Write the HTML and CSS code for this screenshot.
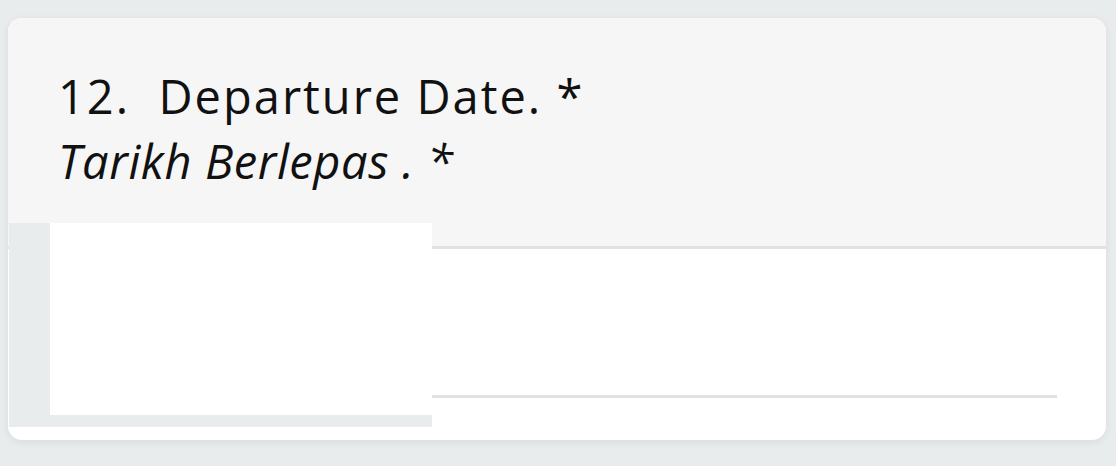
FILE: index.html
```html
<!DOCTYPE html>
<html lang="en">
<head>
  <meta charset="UTF-8">
  <meta name="viewport" content="width=device-width, initial-scale=1.0">
  <title>Departure Date</title>
  <link rel="stylesheet" href="styles.css">
</head>
<body>

<div class="card">
  <div class="card-header">
    <div class="question">12.&nbsp; Departure Date. *</div>
    <div class="question-alt">Tarikh Berlepas . *</div>
  </div>

  <div class="card-body">
    <input type="text" class="date-input" aria-label="Departure Date">
  </div>

  <!-- redacted area -->
  <div class="redact">
    <div class="redact-inner"></div>
  </div>
</div>

</body>
</html>
```

FILE: styles.css
```css
body {
  margin: 0;
  padding: 18px 10px 26px 8px;
  background-color: #e9ecec;
  font-family: 'Open Sans', 'Noto Sans', sans-serif;
}

.card {
  position: relative;
  width: 1098px;
  background-color: white;
  border-radius: 14px;
  overflow: hidden;
  box-shadow: 0px 2px 8px rgba(0, 0, 0, 0.07);
}

.card-header {
  background-color: #f6f6f6;
  padding: 46px 49px 52px 50px;
  border-bottom: 3px solid #e2e2e2;
  color: #111;
  font-size: 47px;
  line-height: 65px;
}

.question {
  letter-spacing: 2px;
}

.question-alt {
  font-style: italic;
  letter-spacing: 0.6px;
}

.card-body {
  padding: 40px 49px 42px 49px;
}

.date-input {
  display: block;
  width: 100%;
  height: 109px;
  box-sizing: border-box;
  border: none;
  border-bottom: 3px solid #e2e2e2;
  background: transparent;
  color: #111;
  font-size: 16px;
  outline: none;
}

.redact {
  position: absolute;
  left: 1px;
  top: 205px;
  width: 423px;
  height: 204px;
  background-color: #e8ecec;
}

.redact-inner {
  margin-left: 41px;
  height: 192px;
  background-color: white;
}
```
